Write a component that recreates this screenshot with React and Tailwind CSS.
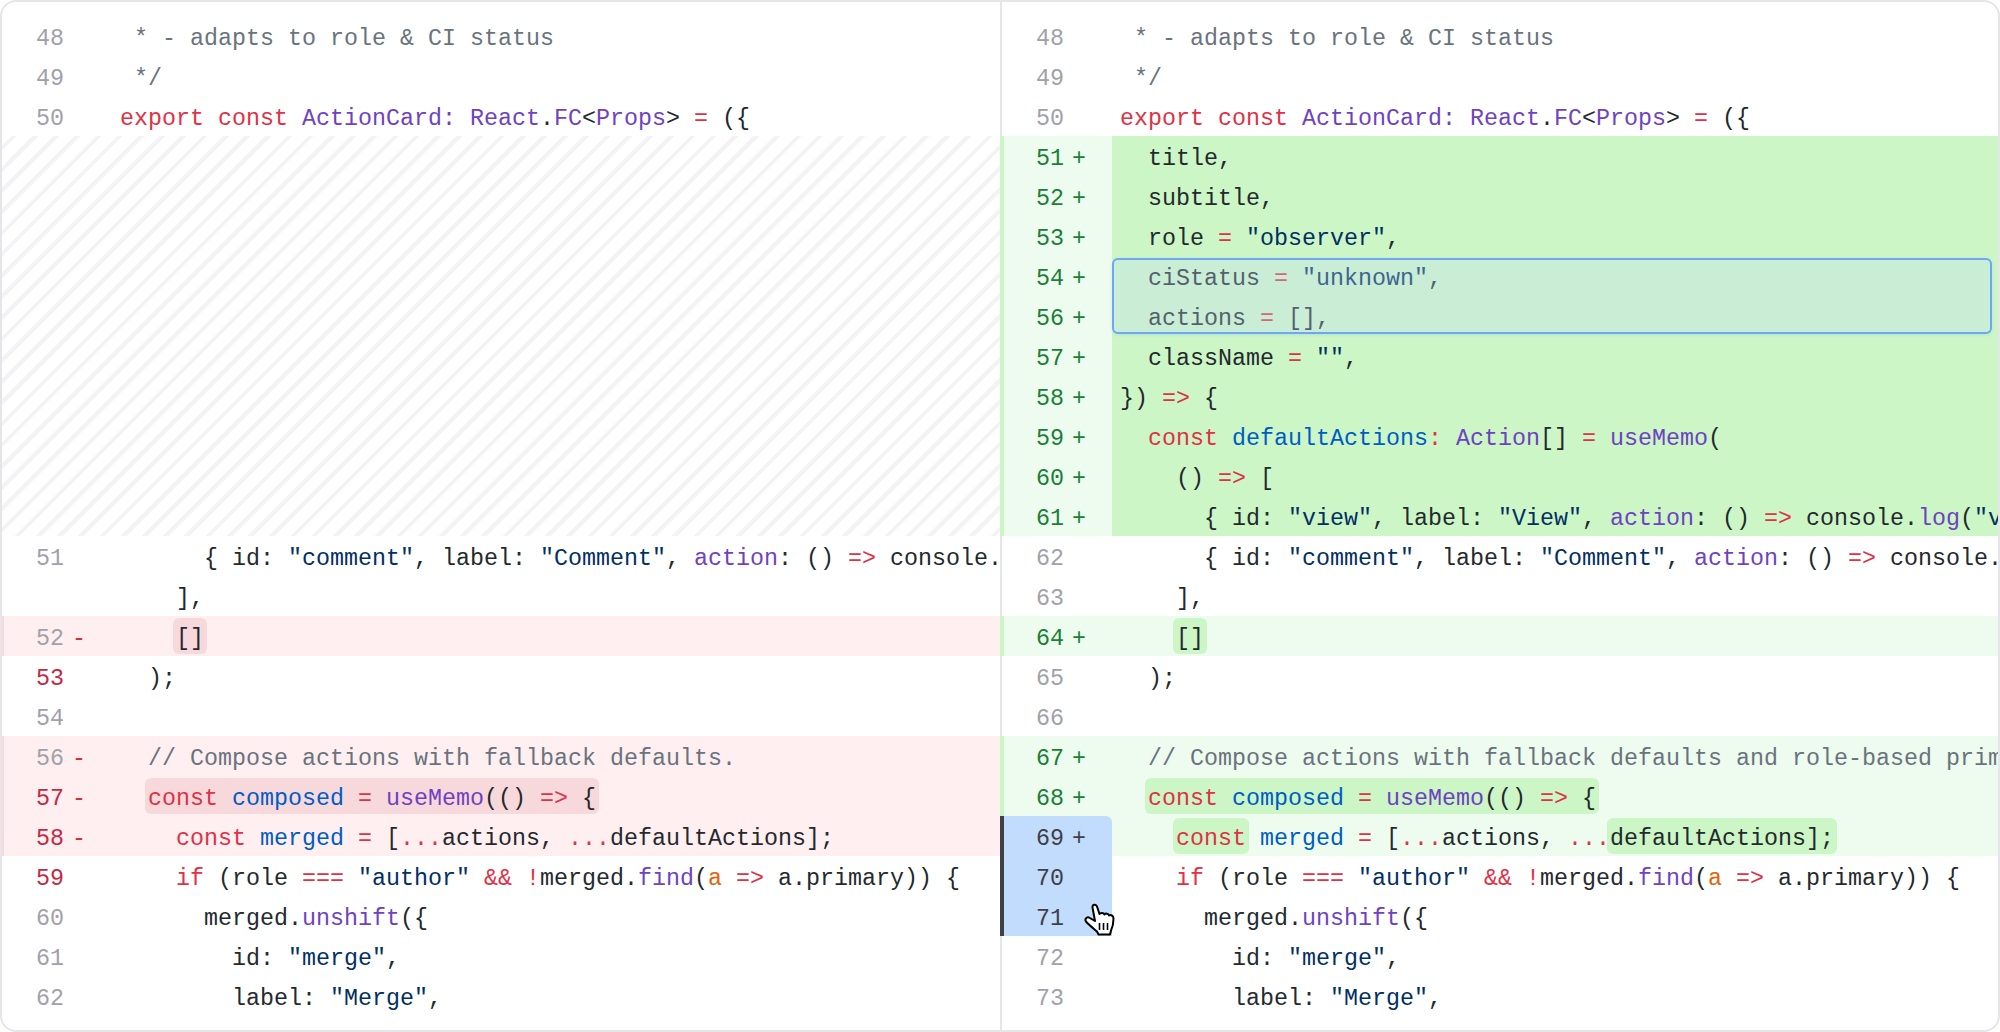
// Side by side diff view with a hover selection
const TOKEN = {
  t: "text-[#24292e]",
  k: "text-[#e03147]",
  p: "text-[#6f42c1]",
  b: "text-[#005cc5]",
  s: "text-[#032f62]",
  c: "text-[#6a737d]",
  o: "text-[#e36209]",
};

const NUM = {
  gray: "text-[#a1a1aa]",
  red: "text-[#c22a45]",
  green: "text-[#1a7f37]",
  dark: "text-[#3f3f46]",
};

const t = (text) => ["t", text];
const k = (text) => ["k", text];
const p = (text) => ["p", text];
const b = (text) => ["b", text];
const s = (text) => ["s", text];
const c = (text) => ["c", text];
const o = (text) => ["o", text];
const mark = (...tokens) => ({ mark: tokens });

const HEAD = [
  { n: 48, code: [c(" * - adapts to role & CI status")] },
  { n: 49, code: [c(" */")] },
  { n: 50, code: [k("export const "), p("ActionCard: React"), t("."), p("FC"), t("<"), p("Props"), t("> "), k("="), t(" ({")] },
];

const viewAction = [
  t("      { id: "), s('"comment"'), t(", label: "), s('"Comment"'), t(", "), p("action"), t(": () "), k("=>"), t(" console."), p("log"), t("("), s('"comment"'), t(")")
];
const composeHead = [k("const "), b("composed"), k(" = "), p("useMemo"), t("(() "), k("=>"), t(" {")];
const ifLine = [
  k("    if"), t(" (role "), k("==="), t(" "), s('"author"'), t(" "), k("&&"), t(" "), k("!"), t("merged."), p("find"), t("("), o("a"), t(" "), k("=>"), t(" a.primary)) {")
];
const unshift = [t("      merged."), p("unshift"), t("({")];
const idLine = [t("        id: "), s('"merge"'), t(",")];
const labelLine = [t("        label: "), s('"Merge"'), t(",")];

const LEFT = [
  ...HEAD,
  { hatch: true },
  { n: 51, code: viewAction },
  { n: 0, blankNum: true, code: [t("    ],")] },
  { n: 52, tone: "del", sign: "-", code: [t("    "), mark(t("[]"))] },
  { n: 53, num: "red", code: [t("  );")] },
  { n: 54 },
  { n: 56, tone: "del", sign: "-", code: [c("  // Compose actions with fallback defaults.")] },
  { n: 57, num: "red", tone: "del", sign: "-", code: [t("  "), mark(...composeHead)] },
  { n: 58, num: "red", tone: "del", sign: "-", code: [k("    const "), b("merged"), k(" = "), t("["), k("..."), t("actions, "), k("..."), t("defaultActions];")] },
  { n: 59, num: "red", code: ifLine },
  { n: 60, code: unshift },
  { n: 61, code: idLine },
  { n: 62, code: labelLine },
];

const RIGHT = [
  ...HEAD,
  { n: 51, tone: "add", code: [t("  title,")] },
  { n: 52, tone: "add", code: [t("  subtitle,")] },
  { n: 53, tone: "add", code: [t("  role "), k("="), t(" "), s('"observer"'), t(",")] },
  { n: 54, tone: "add", code: [t("  ciStatus "), k("="), t(" "), s('"unknown"'), t(",")] },
  { n: 56, tone: "add", code: [t("  actions "), k("="), t(" [],")] },
  { n: 57, tone: "add", code: [t("  className "), k("="), t(" "), s('""'), t(",")] },
  { n: 58, tone: "add", code: [t("}) "), k("=>"), t(" {")] },
  { n: 59, tone: "add", code: [k("  const "), b("defaultActions"), k(":"), t(" "), p("Action"), t("[] "), k("="), t(" "), p("useMemo"), t("(")] },
  { n: 60, tone: "add", code: [t("    () "), k("=>"), t(" [")] },
  { n: 61, tone: "add", code: [t("      { id: "), s('"view"'), t(", label: "), s('"View"'), t(", "), p("action"), t(": () "), k("=>"), t(" console."), p("log"), t("("), s('"view"'), t(")")] },
  { n: 62, code: viewAction },
  { n: 63, code: [t("    ],")] },
  { n: 64, tone: "soft", code: [t("    "), mark(t("[]"))] },
  { n: 65, code: [t("  );")] },
  { n: 66 },
  { n: 67, tone: "soft", code: [c("  // Compose actions with fallback defaults and role-based primary action")] },
  { n: 68, tone: "soft", code: [t("  "), mark(...composeHead)] },
  { n: 69, sel: "first", tone: "soft", sign: "+", code: [t("    "), mark(k("const")), t(" "), b("merged"), k(" = "), t("["), k("..."), t("actions, "), k("..."), mark(t("defaultActions];"))] },
  { n: 70, sel: "mid", code: ifLine },
  { n: 71, sel: "last", code: unshift },
  { n: 72, code: idLine },
  { n: 73, code: labelLine },
];

function Tokens({ code, markClass }) {
  return code.map((tok, i) => {
    if (tok.mark) {
      return (
        <span key={i} className={`inline-block h-9 leading-[42px] rounded-md px-[3px] -mx-[3px] ${markClass}`}>
          <Tokens code={tok.mark} />
        </span>
      );
    }
    return <span key={i} className={TOKEN[tok[0]]}>{tok[1]}</span>;
  });
}

function Cursor() {
  return (
    <svg viewBox="0 0 31 33" className="absolute left-[80px] top-[7px] z-10 w-[31px] h-[33px]">
      <path
        d="M8.5 4.5C8 1.5 12 .5 13 3.5L15.5 11C16.5 9.5 19.5 9.5 20.5 11.5C21.5 10 24.5 10.5 25 12.5C26.5 11.5 29.5 12.5 29.5 15.5C29.5 20 28.5 24.5 27 27.5L26 31.5H14.5L13 28.5C9.5 25.5 5.5 22.5 2 18.5C.5 16.5 2.5 13.5 5 14.5L11 18Z"
        fill="#fff"
        stroke="#000"
        strokeWidth="2"
        strokeLinejoin="round"
      />
      <path d="M15.5 20V27M19.5 20V27M23.5 20V27" stroke="#000" strokeWidth="1.6" fill="none" />
    </svg>
  );
}

function Row({ row, side }) {
  if (row.hatch) {
    return <div className="h-[400px] bg-[repeating-linear-gradient(-45deg,#ffffff_0,#ffffff_3px,#f3f3f6_3px,#f3f3f6_7px,#ffffff_7px,#ffffff_15px)]" />;
  }
  const isRight = side === "right";
  const { tone, sel } = row;

  let rowClass = "border-transparent";
  let gutterClass = "";
  let codeClass = "";
  let markClass = "";
  let numTone = row.num || "gray";
  let sign = row.sign || "";

  if (tone === "del") {
    rowClass = "bg-[#ffeff0] border-[#f9d9dc]";
    markClass = "bg-[#f7d9dc]";
    sign = "-";
  }
  if (tone === "add") {
    rowClass = "border-[#ccf6c6]";
    gutterClass = "bg-[#edfcee]";
    codeClass = "bg-[#ccf6c6]";
    numTone = "green";
    sign = "+";
  }
  if (tone === "soft") {
    rowClass = "bg-[#edfcee] border-[#ccf6c6]";
    markClass = "bg-[#ccf6c6]";
    numTone = "green";
    sign = "+";
  }
  if (sel) {
    rowClass = tone === "soft" ? "bg-[#edfcee] border-[#3f3f46]" : "border-[#3f3f46]";
    gutterClass = sel === "first" ? "bg-[#c1dcfd] rounded-tr-md" : "bg-[#c1dcfd]";
    numTone = "dark";
  }

  const signClass = sel ? "text-[#3f3f46]" : sign === "-" ? "text-[#d6293e]" : "text-[#1a7f37]";

  return (
    <div className={`flex h-10 leading-[46px] ${isRight ? "border-l-4 -ml-[2px]" : "border-l-2"} ${rowClass}`}>
      <div className={`relative shrink-0 w-[108px] pl-[32px] flex ${gutterClass}`}>
        <span className={`w-[36px] ${NUM[numTone]}`}>{row.blankNum ? "" : row.n}</span>
        <span className={signClass}>{sign}</span>
        {row.n === 71 && isRight && <Cursor />}
      </div>
      <div className={`flex-1 min-w-0 pl-2 overflow-hidden whitespace-pre ${codeClass}`}>
        {row.code && <Tokens code={row.code} markClass={markClass} />}
      </div>
    </div>
  );
}

export default function App() {
  return (
    <div className="h-screen bg-white border-2 border-[#e5e5ea] rounded-2xl overflow-hidden flex text-[23.33px] font-['Liberation_Mono',monospace]">
      <div className="w-[998px] shrink-0 py-[14px]">
        {LEFT.map((row, i) => <Row key={i} row={row} side="left" />)}
      </div>
      <div className="relative flex-1 min-w-0 border-l-2 border-[#e5e5ea] py-[14px]">
        {RIGHT.map((row, i) => <Row key={i} row={row} side="right" />)}
        <div className="absolute left-[110px] top-[256px] w-[880px] h-[76px] rounded-md border-2 border-[#6ca8f7] bg-[rgba(194,220,250,0.31)] shadow-[0_1px_3px_rgba(59,130,246,0.15)]" />
      </div>
    </div>
  );
}
